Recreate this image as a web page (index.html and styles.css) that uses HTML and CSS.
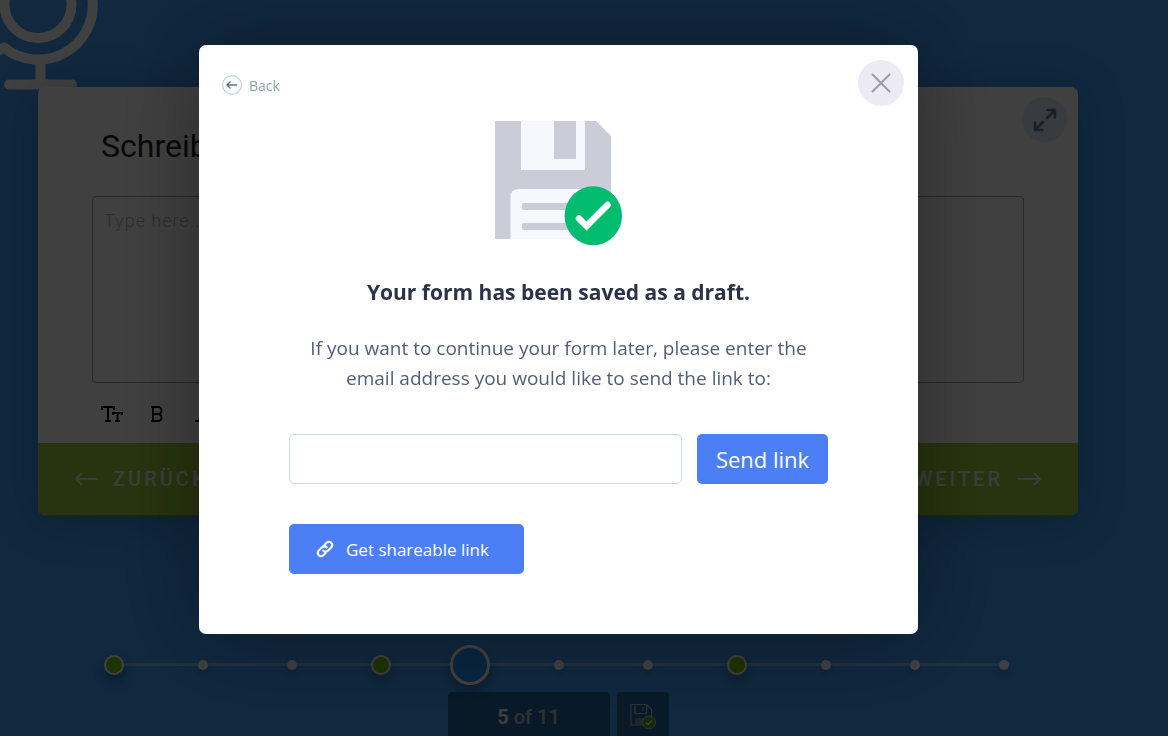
FILE: index.html
```
<!DOCTYPE html>
<html lang="en">
<head>
<meta charset="utf-8">
<meta name="viewport" content="width=device-width, initial-scale=1">
<title>Draft saved</title>
<link rel="stylesheet" href="styles.css">
</head>
<body>
<div class="page">
  <svg class="mic" width="104" height="96" viewBox="0 0 104 96" fill="none" stroke="currentColor" stroke-width="10" stroke-linecap="round" stroke-linejoin="round" aria-hidden="true">
    <circle cx="38" cy="4.500" r="33.500"/>
    <path d="M92.500 0A54.500 54.500 0 0 1 4 47.500L-4 52"/>
    <path d="M40.500 60V84M9 84.500H72"/>
  </svg>
  <main class="card">
    <div class="question">
      <button class="expand" type="button" aria-label="Expand">
        <svg width="24" height="24" viewBox="0 0 24 24" fill="none" stroke="currentColor" stroke-width="2.500" stroke-linecap="round" stroke-linejoin="round"><path d="M14 10L22 2M14.500 2H22V9.500M10 14L2 22M2 14.500V22H9.500"/></svg>
      </button>
      <label class="title" for="answer">Schreiben</label>
      <textarea class="answer" id="answer" placeholder="Type here..."></textarea>
      <div class="tools">
        <button type="button" aria-label="Text size"><svg width="24" height="20" viewBox="0 0 24 20" fill="none" stroke="currentColor" stroke-width="2"><path d="M2 6V3H14V6M8 3V17M5 17H11M13 11V9H22V11M17.500 9V17M15 17H20"/></svg></button>
        <button type="button" aria-label="Bold"><svg width="14" height="20" viewBox="0 0 14 20" fill="none" stroke="currentColor" stroke-width="2"><path d="M1 3H8a3.500 3.500 0 0 1 0 7H3M8 10a3.500 3.500 0 0 1 0 7H1M3 3V17"/></svg></button>
        <button type="button" aria-label="Italic"><svg width="18" height="20" viewBox="0 0 18 20" fill="none" stroke="currentColor" stroke-width="2"><path d="M9 3H17M5 17H12M13 3L9 17"/></svg></button>
      </div>
    </div>
    <nav class="steps">
      <button type="button"><svg width="24" height="16" viewBox="0 0 24 16" fill="none" stroke="currentColor" stroke-width="1.800"><path d="M24 8H2M8 2L2 8L8 14"/></svg>ZURÜCK</button>
      <button type="button">WEITER<svg width="24" height="16" viewBox="0 0 24 16" fill="none" stroke="currentColor" stroke-width="1.800"><path d="M0 8H22M16 2L22 8L16 14"/></svg></button>
    </nav>
  </main>
  <footer class="progress">
    <ol class="dots">
      <li class="done"></li><li></li><li></li><li class="done"></li><li class="current"></li><li></li><li></li><li class="done"></li><li></li><li></li><li></li>
    </ol>
    <div class="status">
      <p class="count"><b>5</b> of 11</p>
      <button class="save" type="button" aria-label="Save draft">
        <svg width="28" height="28" viewBox="0 0 28 28" fill="none" stroke="currentColor" stroke-width="1.200"><path d="M2 2.500H17.500L22.500 7.500V23H2ZM6 2.500V11.500H17.500V2.500M14 5V9M6 17H17M6 19H15M6 21H14"/><circle class="save-badge" cx="20" cy="20.500" r="6.500" stroke-width="1"/><path class="save-check" d="M17 20.500L19 22.500L23 18.500"/></svg>
      </button>
    </div>
  </footer>
</div>
<div class="overlay">
  <section class="dialog" role="dialog" aria-modal="true" aria-labelledby="saved-title">
    <header class="bar">
      <button class="back" type="button">
        <svg width="20" height="20" viewBox="0 0 20 20" fill="none"><circle cx="10" cy="10" r="9.400" stroke="#c3d2d8" stroke-width="1.200"/><path d="M15 10H5.500M8.500 6.500L5 10L8.500 13.500" stroke="#55788c" stroke-width="1.400"/></svg>Back
      </button>
      <button class="close" type="button" aria-label="Close">
        <svg width="20" height="20" viewBox="0 0 20 20" fill="none" stroke="currentColor" stroke-width="2"><path d="M1 1L19 19M19 1L1 19"/></svg>
      </button>
    </header>
    <div class="content">
      <svg class="floppy" width="128" height="125" viewBox="0 0 128 125" aria-hidden="true">
        <path fill="#cccbd8" d="M0 0H101L116 15V118H0Z"/>
        <path fill="#f7f7fe" d="M26 0H90V49H26ZM15.500 118V76Q15.500 68 24 68H106V118Z"/>
        <path fill="#cccbd8" d="M59 0H81V38H59Z"/>
        <rect fill="#cccbd8" x="27" y="82" width="70" height="7" rx="2"/>
        <rect fill="#cccbd8" x="27" y="102" width="70" height="7" rx="2"/>
        <ellipse cx="98.300" cy="94.700" rx="28.700" ry="29.500" fill="#02bd70"/>
        <path d="M84 97.500L91.500 105L112.500 84" fill="none" stroke="#fff" stroke-width="6.500" stroke-linecap="round"/>
      </svg>
      <h1 id="saved-title">Your form has been saved as a draft.</h1>
      <p id="hint">If you want to continue your form later, please enter the email address you would like to send the link to:</p>
      <form class="send">
        <input type="email" aria-labelledby="hint">
        <button type="button">Send link</button>
      </form>
      <button class="share" type="button">
        <svg width="20" height="20" viewBox="0 0 24 24" fill="none" stroke="currentColor" stroke-width="2.600" stroke-linecap="round"><path d="M10 14a4 4 0 0 0 5.500 0l4.500-4.500a4 4 0 0 0-5.500-5.500L11.500 7"/><path d="M14 10a4 4 0 0 0-5.500 0l-4.500 4.500a4 4 0 0 0 5.500 5.500L12.500 17"/></svg>Get shareable link
      </button>
    </div>
  </section>
</div>
</body>
</html>
```
FILE: styles.css
```
* { box-sizing: border-box; }
body { margin: 0; overflow: hidden; background: #449ef8; font-family: Roboto, sans-serif; }
button, input, textarea { font: inherit; }
button { border: 0; padding: 0; background: none; color: inherit; cursor: pointer; }
svg { display: block; flex: none; }

.page { position: relative; display: flex; flex-direction: column; align-items: center; min-height: 100vh; padding: 87px 90px 0 38px; }
.mic { position: absolute; left: 0; top: 0; color: #fff; }

.card { position: relative; width: 100%; border-radius: 7px; background: #fff; box-shadow: 0 4px 50px rgba(0, 0, 0, .2); overflow: hidden; }
.question { display: flex; flex-direction: column; padding: 39px 54px 16px; }
.expand { position: absolute; top: 10px; right: 11px; display: grid; place-items: center; width: 45px; height: 45px; border-radius: 50%; background: #dfe9fa; color: #68789c; }
.title { padding-left: 9px; font-size: 32px; line-height: 40px; color: #222; }
.answer { height: 187px; margin-top: 30px; padding: 12px 11px; border: 1px solid #a0a0b4; border-radius: 4px; background: none; font-size: 18px; font-weight: 300; line-height: 24px; letter-spacing: 1px; resize: none; outline: 0; }
.answer::placeholder { color: #b8b8b8; }
.tools { display: flex; align-items: center; gap: 26px; height: 44px; padding: 18px 8px 0; color: #000; }
.steps { display: flex; justify-content: space-between; align-items: center; height: 72px; padding: 0 36px; background: #a0cc3c; color: #f0f0f0; }
.steps button { display: flex; align-items: center; gap: 15px; font-size: 20px; font-weight: 500; letter-spacing: 3px; }

.progress { display: flex; flex-direction: column; align-items: center; gap: 17px; width: 100%; max-width: 912px; margin-top: auto; }
.dots { position: relative; display: flex; justify-content: space-between; align-items: center; width: 100%; height: 20px; margin: 0; padding: 0 0 0 2px; list-style: none; }
.dots::before { content: ""; position: absolute; left: 12px; right: 10px; top: 8px; height: 3px; background: #88c4f4; }
.dots li { position: relative; width: 10px; height: 10px; margin: 0 5px; border-radius: 50%; background: #fff; box-shadow: 0 3px 6px rgba(0, 0, 0, .2); }
.dots .done { width: 20px; height: 20px; margin: 0; border: 2px solid #fff; background: #74cc00; box-shadow: 0 6px 12px rgba(0, 0, 0, .3); }
.dots .current { width: 40px; height: 40px; margin: 0 -10px; border: 3px solid #fff; background: #2494fc; box-shadow: 0 6px 12px rgba(0, 0, 0, .3); }
.status { display: flex; gap: 7px; }
.count, .save { height: 44px; margin: 0; border-radius: 4px 4px 0 0; background: #2064a0; color: #b8c4d0; }
.count { width: 162px; padding-top: 3px; font-size: 20px; font-weight: 500; line-height: 44px; text-align: center; }
.count b { color: #f0f4f8; font-weight: 700; }
.save { display: grid; place-items: center; width: 52px; padding-top: 4px; }
.save-badge { fill: #48b018; }
.save-check { stroke: #fff; }

.overlay { position: fixed; inset: 0; display: flex; justify-content: center; align-items: flex-start; padding: 45px 51px 45px 0; background: rgba(0, 0, 0, .75); }
.dialog { width: 719px; padding: 15px 14px 60px 23px; border-radius: 7px; background: #fff; box-shadow: 0 0 90px rgba(0, 0, 0, .35); font-family: "Segoe UI", "Open Sans", sans-serif; }
.bar { display: flex; justify-content: space-between; align-items: center; }
.back { display: flex; align-items: center; gap: 7px; margin-top: 4px; font-size: 14px; color: #8fa3ad; }
.close { display: grid; place-items: center; width: 46px; height: 46px; border-radius: 50%; background: #ecebf5; color: #9c9ca8; }
.content { display: flex; flex-direction: column; align-items: center; padding: 15px 76px 0 67px; }
h1 { margin: 30px 0 0; font-size: 21px; line-height: 32px; font-weight: 700; color: #2c3349; }
.content p { max-width: 520px; margin: 25px 0 0; font-size: 19px; line-height: 30px; text-align: center; color: #535d78; }
.send { display: flex; gap: 15px; width: 100%; margin-top: 41px; }
.send input { flex: 1; min-width: 0; height: 50px; padding: 0 12px; border: 1px solid #ced7db; border-radius: 5px; background: #fff; }
.send button, .share { height: 50px; border-radius: 5px; background: #4c7ff5; color: #fff; }
.send button { width: 131px; font-size: 22px; }
.share { display: flex; align-items: center; gap: 11px; align-self: flex-start; width: 235px; margin-top: 40px; padding-left: 26px; font-size: 17px; }
```
